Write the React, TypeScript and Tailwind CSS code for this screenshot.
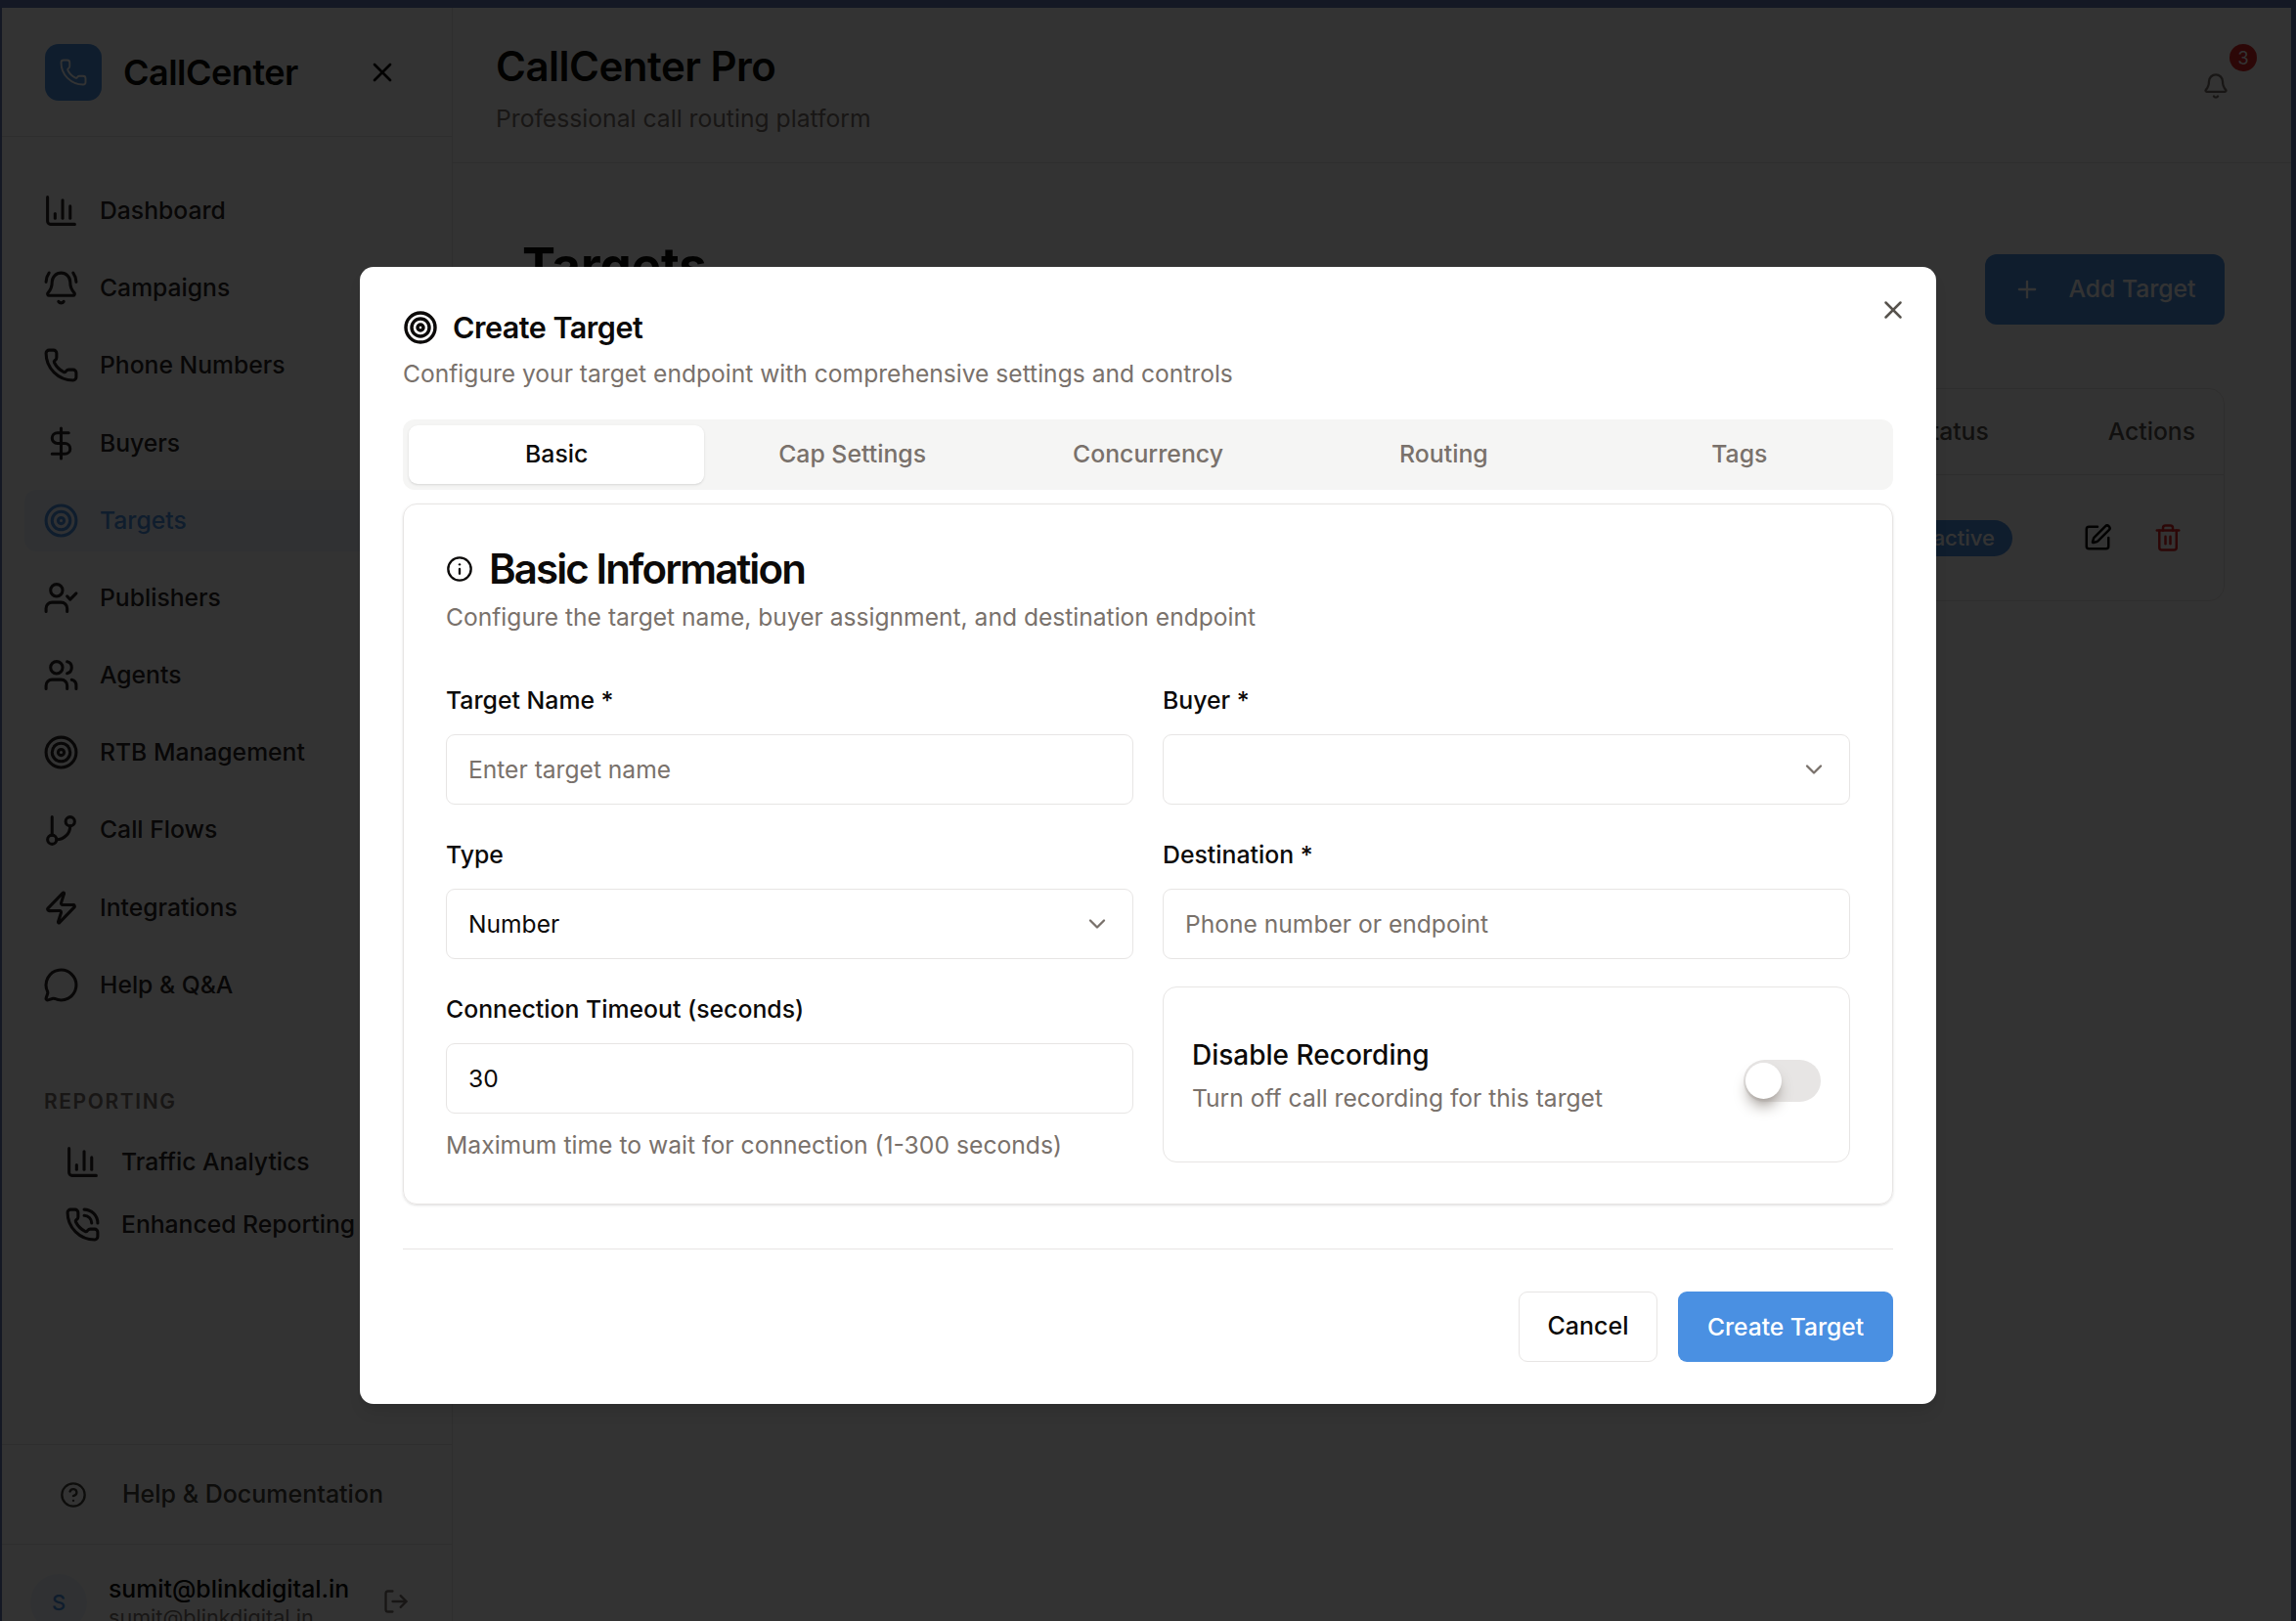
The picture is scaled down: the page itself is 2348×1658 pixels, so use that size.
import React from 'react';
import {
  Bell,
  BellRing,
  ChartColumn,
  ChevronDown,
  CircleHelp,
  DollarSign,
  GitBranch,
  Info,
  LogOut,
  MessageCircle,
  Phone,
  PhoneCall,
  Plus,
  SquarePen,
  Target,
  Trash2,
  UserCheck,
  Users,
  X,
  Zap,
} from 'lucide-react';

const navItems = [
  { label: 'Dashboard', icon: ChartColumn },
  { label: 'Campaigns', icon: BellRing },
  { label: 'Phone Numbers', icon: Phone },
  { label: 'Buyers', icon: DollarSign },
  { label: 'Targets', icon: Target, active: true },
  { label: 'Publishers', icon: UserCheck },
  { label: 'Agents', icon: Users },
  { label: 'RTB Management', icon: Target },
  { label: 'Call Flows', icon: GitBranch },
  { label: 'Integrations', icon: Zap },
  { label: 'Help & Q&A', icon: MessageCircle },
];

const tabs = ['Basic', 'Cap Settings', 'Concurrency', 'Routing', 'Tags'];

function Sidebar() {
  return (
    <aside className="flex h-[1686px] w-[461px] shrink-0 flex-col border-r border-stone-200 bg-white">
      <div className="flex h-[132px] shrink-0 items-center border-b border-stone-200 pl-[44px] pr-[55px]">
        <div className="flex h-[58px] w-[58px] items-center justify-center rounded-[14px] bg-[#4a90e2]">
          <Phone className="h-[30px] w-[30px] text-white" strokeWidth={1.5} />
        </div>
        <span className="ml-[22px] flex-1 text-[36px] font-semibold tracking-[-0.5px] text-stone-950">CallCenter</span>
        <X className="h-[32px] w-[32px] text-stone-950" />
      </div>

      <nav className="flex flex-1 flex-col px-[23px] pt-[44px]">
        <div className="flex flex-col gap-[16.2px]">
          {navItems.map((item) => (
            <div
              key={item.label}
              className={`flex h-[63px] items-center gap-[21px] rounded-[12px] px-[19px] text-[24.7px] font-medium ${
                item.active ? 'bg-[#eff6ff] text-[#4a90e2]' : 'text-stone-800'
              }`}
            >
              <item.icon className="h-[37px] w-[37px] shrink-0" strokeWidth={2} />
              {item.label}
            </div>
          ))}
        </div>
        <p className="mt-[72px] px-[20px] text-[21px] font-semibold tracking-[1.6px] text-stone-500">REPORTING</p>
        <div className="mt-[15px] flex flex-col gap-[2.5px] pl-[41px]">
          <div className="flex h-[62px] items-center gap-[21px] text-[24.7px] font-medium text-stone-800">
            <ChartColumn className="h-[37px] w-[37px] shrink-0" />
            Traffic Analytics
          </div>
          <div className="flex h-[62px] items-center gap-[21px] text-[24.7px] font-medium whitespace-nowrap text-stone-800">
            <PhoneCall className="h-[37px] w-[37px] shrink-0" />
            Enhanced Reporting
          </div>
        </div>
      </nav>

      <div className="flex h-[102px] shrink-0 items-center gap-[36px] border-t border-stone-200 pl-[59px] text-[25px] font-medium text-stone-700">
        <CircleHelp className="h-[28px] w-[28px]" />
        Help & Documentation
      </div>
      <div className="flex h-[115px] shrink-0 items-start border-t border-stone-200 pl-[29px] pt-[30px]">
        <div className="flex h-[58px] w-[58px] shrink-0 items-center justify-center rounded-full bg-[#eff6ff] text-[22px] font-medium text-[#4a90e2]">S</div>
        <div className="ml-[22px] w-[280px] shrink-0">
          <p className="text-[24.8px] leading-[30px] font-medium text-stone-950">sumit@blinkdigital.in</p>
          <p className="text-[21.6px] leading-[28px] text-stone-500">sumit@blinkdigital.in</p>
        </div>
        <LogOut className="mt-[14px] h-[28px] w-[28px] shrink-0 text-stone-500" />
      </div>
    </aside>
  );
}

function Page() {
  return (
    <div className="flex min-w-0 flex-1 flex-col">
      <header className="flex h-[159px] shrink-0 items-start justify-between border-b border-stone-200 pl-[44px] pr-[63px] pt-[34px]">
        <div>
          <h1 className="text-[42px] leading-[52px] font-semibold tracking-[-0.5px] text-stone-950">CallCenter Pro</h1>
          <p className="mt-[9px] text-[24.7px] text-stone-500">Professional call routing platform</p>
        </div>
        <div className="relative mt-[32px]">
          <Bell className="h-[28px] w-[28px] text-stone-500" />
          <span className="absolute -top-[29px] left-[28px] flex h-[28px] w-[28px] items-center justify-center rounded-full bg-[#dc2626] text-[18px] text-white">3</span>
        </div>
      </header>
      <main className="flex-1 pl-[71px] pr-[68px] pt-[93px]">
        <div className="flex items-start justify-between">
          <h2 className="-mt-[20px] text-[51px] leading-[64px] font-bold text-stone-950">Targets</h2>
          <button className="flex h-[72px] w-[245px] items-center justify-center gap-[28px] rounded-[12px] bg-[#4a90e2] text-[24.7px] font-medium text-white">
            <Plus className="h-[28px] w-[28px]" />
            Add Target
          </button>
        </div>
        <div className="mt-[65px] rounded-[16px] border border-stone-200">
          <div className="flex h-[88px] items-center justify-end gap-[122px] border-b border-stone-200 pr-[29px] text-[24.7px] font-medium text-stone-600">
            <span>Status</span>
            <span>Actions</span>
          </div>
          <div className="flex h-[128px] items-center justify-end pr-[42px]">
            <span className="rounded-full bg-[#4a90e2] px-[18px] py-[2px] text-[22px] font-medium text-white">active</span>
            <SquarePen className="ml-[72px] h-[30px] w-[30px] text-stone-950" />
            <Trash2 className="ml-[42px] h-[30px] w-[30px] text-[#dc2626]" />
          </div>
        </div>
      </main>
    </div>
  );
}

function Field({ label, children, help }: { label: string; children: React.ReactNode; help?: string }) {
  return (
    <div>
      <label className="block text-[24.8px] leading-[30px] font-medium text-stone-950">{label}</label>
      <div className="mt-[20px]">{children}</div>
      {help && <p className="mt-[17px] text-[24.7px] leading-[30px] text-stone-500">{help}</p>}
    </div>
  );
}

function Box({ children, muted }: { children?: React.ReactNode; muted?: boolean }) {
  return (
    <div
      className={`flex h-[72px] items-center justify-between rounded-[9px] border border-stone-200 bg-white px-[22px] text-[24.6px] ${
        muted ? 'text-stone-500' : 'text-stone-950'
      }`}
    >
      {children}
    </div>
  );
}

function Modal() {
  return (
    <div className="absolute left-[368px] top-[273px] w-[1612px] rounded-[14px] bg-white px-[44px] pb-[43px] pt-[44px] shadow-lg">
      <X className="absolute right-[29px] top-[29px] h-[30px] w-[30px] text-stone-600" />
      <div className="flex items-center gap-[15px]">
        <Target className="h-[36px] w-[36px] text-stone-950" strokeWidth={2.3} />
        <h2 className="text-[30.5px] leading-[36px] font-semibold tracking-[-0.5px] text-stone-950">Create Target</h2>
      </div>
      <p className="mt-[11px] text-[24.6px] leading-[36px] text-stone-500">Configure your target endpoint with comprehensive settings and controls</p>

      <div className="mt-[29px] grid h-[72px] grid-cols-5 rounded-[12px] bg-stone-100 p-[6px]">
        {tabs.map((tab, i) => (
          <div
            key={tab}
            className={`flex items-center justify-center rounded-[9px] text-[24.8px] font-medium ${
              i === 0 ? 'bg-white text-stone-950 shadow-sm' : 'text-stone-500'
            }`}
          >
            {tab}
          </div>
        ))}
      </div>

      <section className="mt-[14px] h-[717px] rounded-[14px] border border-stone-200 p-[43px] shadow-sm">
        <div className="flex items-center gap-[16px]">
          <Info className="h-[28px] w-[28px] text-stone-950" />
          <h3 className="text-[42px] leading-[46px] font-semibold tracking-[-1.9px] text-stone-950">Basic Information</h3>
        </div>
        <p className="mt-[8px] text-[24.6px] leading-[36px] text-stone-500">Configure the target name, buyer assignment, and destination endpoint</p>

        <div className="mt-[52px] grid grid-cols-2 gap-x-[30px] gap-y-[36px]">
          <Field label="Target Name *">
            <Box muted>Enter target name</Box>
          </Field>
          <Field label="Buyer *">
            <Box>
              <span />
              <ChevronDown className="h-[28px] w-[28px] text-stone-500" />
            </Box>
          </Field>
          <Field label="Type">
            <Box>
              Number
              <ChevronDown className="h-[28px] w-[28px] text-stone-500" />
            </Box>
          </Field>
          <Field label="Destination *">
            <Box muted>Phone number or endpoint</Box>
          </Field>
          <Field label="Connection Timeout (seconds)" help="Maximum time to wait for connection (1-300 seconds)">
            <Box>30</Box>
          </Field>
          <div className="-mt-[8px] flex h-[180px] items-center justify-between rounded-[14px] border border-stone-200 px-[29px]">
            <div>
              <p className="text-[28px] leading-[36px] font-medium text-stone-950">Disable Recording</p>
              <p className="mt-[10px] pt-[1px] text-[24.6px] leading-[30px] text-stone-500">Turn off call recording for this target</p>
            </div>
            <div className="mt-[13px] flex h-[43px] w-[79px] items-center rounded-full bg-stone-200 px-[2px]">
              <div className="h-[37px] w-[37px] rounded-full bg-white shadow-lg shadow-stone-400" />
            </div>
          </div>
        </div>
      </section>

      <div className="mt-[45px] flex justify-end gap-[21px] border-t border-stone-200 pt-[43px]">
        <button className="h-[72px] w-[142px] rounded-[9px] border border-stone-200 bg-white text-[25px] font-medium text-stone-950">Cancel</button>
        <button className="h-[72px] w-[220px] rounded-[9px] bg-[#4a90e2] text-[24.6px] font-medium text-white">Create Target</button>
      </div>
    </div>
  );
}

export default function App() {
  return (
    <div className="relative h-[1658px] w-[2348px] overflow-hidden bg-[#141824] font-['Inter',sans-serif]">
      <div className="ml-[2px] mr-[5px] mt-[8px] flex h-[1650px] bg-white">
        <Sidebar />
        <Page />
      </div>
      <div className="absolute bottom-0 left-[2px] right-[5px] top-[8px] bg-black/80" />
      <Modal />
    </div>
  );
}
